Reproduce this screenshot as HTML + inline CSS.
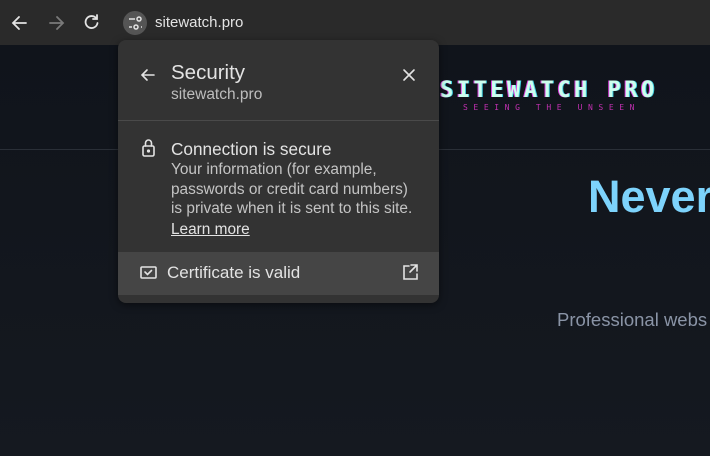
<!DOCTYPE html>
<html><head><style>
body{margin:0;width:710px;height:456px;overflow:hidden;background:#13161c;font-family:"Liberation Sans",sans-serif;position:relative}
.tb{position:absolute;left:0;top:0;width:710px;height:45px;background:#2a2a2a}
.page{position:absolute;left:0;top:45px;width:710px;height:411px;background:linear-gradient(180deg,#10141b,#151920)}
.hr{position:absolute;left:0;top:149px;width:710px;height:1px;background:#2a2f37}
.pop{position:absolute;left:118px;top:40px;width:321px;height:263px;background:#333333;border-radius:8px;box-shadow:0 2px 8px rgba(0,0,0,.5);overflow:hidden}
.t{position:absolute;white-space:nowrap}
</style></head><body>
<div class="tb"></div>
<svg style="position:absolute;left:0;top:0" width="160" height="45">
<g fill="none" stroke-width="1.8" stroke-linecap="round">
<path d="M26 23H14M19 17l-6 6 6 6" stroke="#e3e3e3"/>
<path d="M50 23h12M57 17l6 6-6 6" stroke="#7a7a7a"/>
<path d="M96 18a6 6 0 1 0 1.5 5" stroke="#e3e3e3"/><path d="M97 15v4h-4" stroke="#e3e3e3"/>
</g>
<circle cx="135" cy="23" r="12" fill="#555"/>
<g stroke="#e3e3e3" stroke-width="1.5" fill="none"><path d="M129 19h6M129 27h3"/><circle cx="139" cy="19" r="2"/><circle cx="136" cy="27" r="2"/><path d="M141 27h1"/></g>
</svg>
<div class="t" style="left:155px;top:14px;font-size:15px;color:#e3e3e3">sitewatch.pro</div>
<div class="page"></div>
<div class="hr"></div>
<div class="t" style="left:440px;top:78px;font-size:22px;font-weight:bold;letter-spacing:3.5px;color:#cfe;font-family:'DejaVu Sans Mono',monospace;text-shadow:-1px 0 #e040e0,1px 0 #40d0e0">SITEWATCH PRO</div>
<div class="t" style="left:463px;top:103px;font-size:8px;letter-spacing:5.6px;color:#c030b0;font-family:'DejaVu Sans Mono',monospace">SEEING THE UNSEEN</div>
<div class="t" style="left:588px;top:171px;font-size:45px;font-weight:bold;color:#7dd3fc">Never</div>
<div class="t" style="left:557px;top:309px;font-size:18.5px;color:#8a94a6">Professional webs</div>
<div class="pop">
<svg style="position:absolute;left:0;top:0" width="321" height="263">
<rect x="0" y="80" width="321" height="1" fill="#4a4a4a"/>
<rect x="0" y="212" width="321" height="43" fill="#454545"/>
<g fill="none" stroke="#e3e3e3" stroke-width="1.6" stroke-linecap="round">
<path d="M36 35H24M29 30l-5 5 5 5"/>
<path d="M286 30l10 10M296 30l-10 10"/>
<rect x="25" y="106" width="11" height="10" rx="1.5"/><path d="M27.5 106v-3a3 3 0 0 1 6 0v3"/><circle cx="30.5" cy="111" r="0.8" fill="#e3e3e3"/>
<rect x="23" y="227" width="15" height="11" rx="1"/><path d="M27 232l2.5 2.5 4-4"/>
<path d="M291 226h-5v13h13v-5M293 225h6v6M299 225l-7 7"/>
</g>
</svg>
<div class="t" style="left:53px;top:21px;font-size:20.5px;color:#e3e3e3">Security</div>
<div class="t" style="left:53px;top:46px;font-size:15.5px;color:#bdbdbd">sitewatch.pro</div>
<div class="t" style="left:53px;top:99px;font-size:17.2px;color:#e3e3e3">Connection is secure</div>
<div class="t" style="left:53px;top:120px;font-size:15.4px;line-height:19.5px;color:#c4c4c4">Your information (for example,<br>passwords or credit card numbers)<br>is private when it is sent to this site.<br><span style="text-decoration:underline;color:#e3e3e3;line-height:22px">Learn more</span></div>
<div class="t" style="left:49px;top:223px;font-size:17px;color:#e3e3e3">Certificate is valid</div>
</div>
</body></html>
